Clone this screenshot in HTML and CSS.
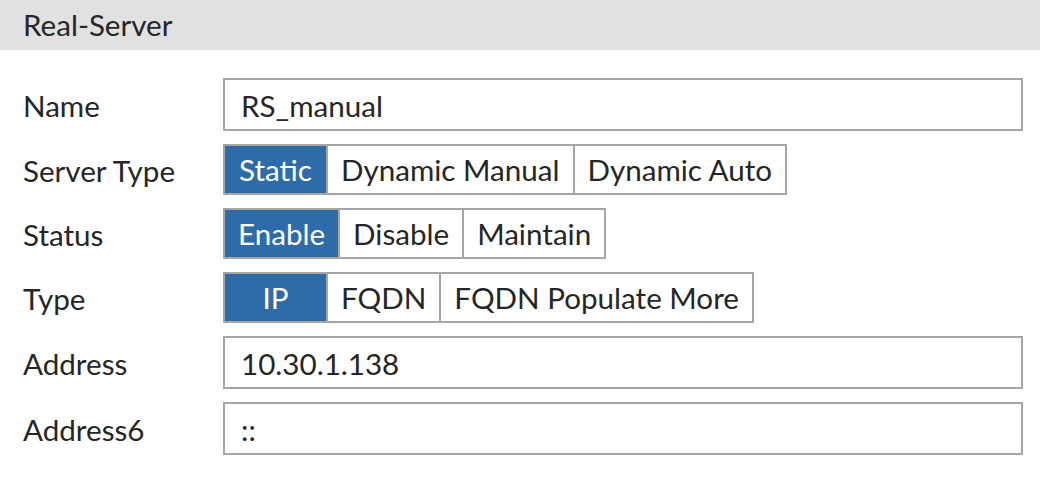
FILE: index.html
```html
<!DOCTYPE html>
<html>
<head>
<meta charset="utf-8">
<link rel="stylesheet" href="styles.css">
</head>
<body>
<div class="panel">
  <div class="header">Real-Server</div>
  <div class="form">
    <div class="row">
      <div class="label">Name</div>
      <div class="input">RS_manual</div>
    </div>
    <div class="row">
      <div class="label">Server Type</div>
      <div class="seg">
        <div class="opt active">Static</div>
        <div class="opt">Dynamic Manual</div>
        <div class="opt">Dynamic Auto</div>
      </div>
    </div>
    <div class="row">
      <div class="label">Status</div>
      <div class="seg">
        <div class="opt active">Enable</div>
        <div class="opt">Disable</div>
        <div class="opt">Maintain</div>
      </div>
    </div>
    <div class="row">
      <div class="label">Type</div>
      <div class="seg">
        <div class="opt active">IP</div>
        <div class="opt">FQDN</div>
        <div class="opt">FQDN Populate More</div>
      </div>
    </div>
    <div class="row">
      <div class="label">Address</div>
      <div class="input">10.30.1.138</div>
    </div>
    <div class="row">
      <div class="label">Address6</div>
      <div class="input">::</div>
    </div>
  </div>
</div>
</body>
</html>
```

FILE: styles.css
```css
html, body {
  margin: 0;
  padding: 0;
  background: #ffffff;
}
body {
  font-family: Lato, "Liberation Sans", sans-serif;
  font-size: 29.6px;
  line-height: 36px;
  color: #262626;
  width: 1040px;
  height: 492px;
  overflow: hidden;
}
.header {
  height: 50px;
  background: #e1e1e1;
  display: flex;
  align-items: center;
  padding-left: 23px;
  color: #262626;
}
.form {
  display: flex;
  flex-direction: column;
  gap: 13px;
  padding: 28px 17px 0 23px;
}
.row {
  display: flex;
  align-items: center;
}
.label {
  width: 200px;
  flex: none;
  padding-top: 2px;
}
.input {
  box-sizing: border-box;
  width: 800px;
  height: 53px;
  border: 2px solid #a6a6a6;
  padding: 2px 16px 0 16px;
  display: flex;
  align-items: center;
}
.seg {
  box-sizing: border-box;
  height: 51px;
  display: flex;
  border: 2px solid #a6a6a6;
}
.opt {
  min-width: 75px;
  padding: 0 13px;
  display: flex;
  align-items: center;
  justify-content: center;
  background: #fff;
}
.opt + .opt {
  border-left: 2px solid #a6a6a6;
}
.opt.active {
  background: #2e6ba9;
  color: #ffffff;
}
```
